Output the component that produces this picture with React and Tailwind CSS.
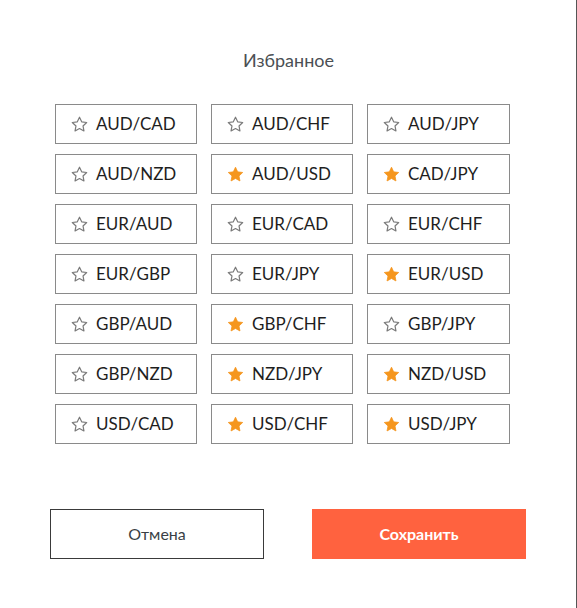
import React, { useState } from "react";

const pairs = [
  ["AUD/CAD", false],
  ["AUD/CHF", false],
  ["AUD/JPY", false],
  ["AUD/NZD", false],
  ["AUD/USD", true],
  ["CAD/JPY", true],
  ["EUR/AUD", false],
  ["EUR/CAD", false],
  ["EUR/CHF", false],
  ["EUR/GBP", false],
  ["EUR/JPY", false],
  ["EUR/USD", true],
  ["GBP/AUD", false],
  ["GBP/CHF", true],
  ["GBP/JPY", false],
  ["GBP/NZD", false],
  ["NZD/JPY", true],
  ["NZD/USD", true],
  ["USD/CAD", false],
  ["USD/CHF", true],
  ["USD/JPY", true],
];

const Star = ({ filled }) => (
  <svg width="19" height="19" viewBox="0 0 24 24" className="shrink-0">
    <path
      d="M12 2.8l2.75 5.85 6.35.8-4.67 4.4 1.2 6.3L12 17.05l-5.63 3.1 1.2-6.3-4.67-4.4 6.35-.8z"
      fill={filled ? "#f5961e" : "none"}
      stroke={filled ? "#f5961e" : "#7a7a7a"}
      strokeWidth={filled ? 1 : 1.5}
      strokeLinejoin="round"
    />
  </svg>
);

export default function App() {
  const [favs, setFavs] = useState(() => pairs.map((p) => p[1]));

  const toggle = (i) => {
    setFavs((f) => f.map((v, j) => (j === i ? !v : v)));
  };

  return (
    <div
      className="w-[577px] h-[608px] bg-white border-r border-[#555] flex flex-col"
      style={{ fontFamily: "Lato, 'Noto Sans', sans-serif" }}
    >
      <h2 className="pt-[48px] text-center text-[18px] leading-[24px] text-[#4b4f54] pl-[1px]">
        Избранное
      </h2>

      <div className="ml-[55px] mt-[32px] grid grid-cols-[142px_142px_143px] gap-x-[14px] gap-y-[10px]">
        {pairs.map(([name], i) => (
          <button
            key={name}
            onClick={() => toggle(i)}
            className="h-[40px] border border-[#8a8a8a] flex items-center gap-[7px] pl-[14px] text-[17px] text-[#1e1e1e] bg-white"
          >
            <Star filled={favs[i]} />
            <span>{name}</span>
          </button>
        ))}
      </div>

      <div className="ml-[50px] mt-[65px] flex gap-[48px]">
        <button className="w-[214px] h-[50px] border border-[#3a3a3a] text-[16px] text-[#3a3f45]">
          Отмена
        </button>
        <button className="w-[214px] h-[50px] bg-[#ff623f] text-[16px] font-bold text-white">
          Сохранить
        </button>
      </div>
    </div>
  );
}
